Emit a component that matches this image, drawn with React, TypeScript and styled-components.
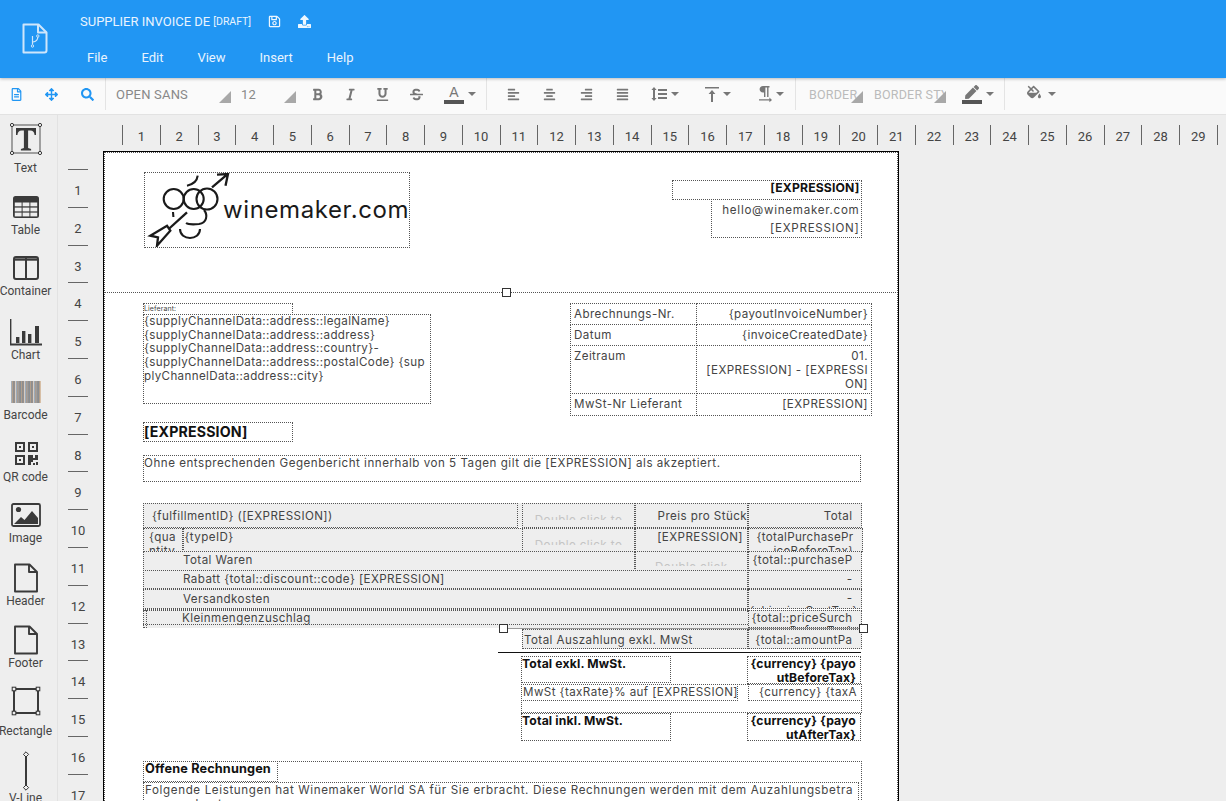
import React from 'react';
import styled, { createGlobalStyle } from 'styled-components';
import {
  FaRegFileAlt,
  FaArrowsAlt,
  FaSearch,
  FaBold,
  FaItalic,
  FaUnderline,
  FaStrikethrough,
  FaAlignLeft,
  FaAlignCenter,
  FaAlignRight,
  FaAlignJustify,
  FaPen,
  FaFillDrip,
  FaRegSave,
  FaUpload,
} from 'react-icons/fa';

const GlobalStyle = createGlobalStyle`
  html, body {
    margin: 0;
    height: 100%;
    overflow: hidden;
    background: #eeeeee;
    font-family: Roboto, "Liberation Sans", sans-serif;
  }
`;

const Shell = styled.div`
  display: flex;
  flex-direction: column;
  height: 801px;
  overflow: hidden;
`;

/* ---------- top bar ---------- */

const TopBar = styled.header`
  display: flex;
  flex: none;
  height: 78px;
  background: #2196f3;
  color: #fff;
  position: relative;
  z-index: 2;
  box-shadow: 0 1px 3px rgba(0, 0, 0, 0.25);
`;

const LogoSlot = styled.div`
  width: 80px;
  padding: 23px 0 0 22px;
  box-sizing: border-box;
`;

const TopColumn = styled.div`
  display: flex;
  flex-direction: column;
`;

const TitleRow = styled.div`
  display: flex;
  align-items: center;
  height: 21px;
  margin-top: 11px;
  font-size: 13px;
  color: #e9f4fe;
`;

const Draft = styled.span`
  font-size: 10.5px;
  margin-left: 3px;
`;

const TitleIcon = styled.span<{ $ml: number }>`
  display: flex;
  margin-left: ${(p) => p.$ml}px;
  font-size: 13px;
  color: #eef7fe;
`;

const MenuRow = styled.nav`
  display: flex;
  gap: 34px;
  margin: 16px 0 0 7px;
  font-size: 13px;
  line-height: 20px;
  color: #e9f4fe;
`;

/* ---------- toolbar ---------- */

const ToolBar = styled.div`
  display: flex;
  flex: none;
  height: 36px;
  background: #fafafa;
  border-bottom: 1px solid #e2e2e2;
`;

const ToolGroup = styled.div<{ $w: number; $pl?: number; $last?: boolean }>`
  display: flex;
  align-items: center;
  box-sizing: border-box;
  width: ${(p) => p.$w}px;
  height: 32px;
  padding-left: ${(p) => p.$pl ?? 0}px;
  border-right: ${(p) => (p.$last ? '0' : '1px solid #e4e4e4')};
`;

const ToolButton = styled.button<{ $w: number; $ml?: number; $blue?: boolean; $size?: number }>`
  display: flex;
  align-items: center;
  justify-content: center;
  flex: none;
  gap: 4px;
  width: ${(p) => p.$w}px;
  height: 30px;
  margin-left: ${(p) => p.$ml ?? 0}px;
  padding: 0;
  border: 0;
  background: none;
  font-size: ${(p) => p.$size ?? 13}px;
  color: ${(p) => (p.$blue ? '#2196f3' : '#777777')};
`;

const Caret = styled.i`
  display: block;
  width: 0;
  height: 0;
  border-left: 4px solid transparent;
  border-right: 4px solid transparent;
  border-top: 4px solid #777777;
`;

const SelectBox = styled.div<{ $w: number; $ml?: number; $faded?: boolean }>`
  position: relative;
  flex: none;
  width: ${(p) => p.$w}px;
  height: 30px;
  margin-left: ${(p) => p.$ml ?? 0}px;
  overflow: hidden;
  white-space: nowrap;
  line-height: 31px;
  font-size: ${(p) => (p.$faded ? 12.5 : 13)}px;
  letter-spacing: 0.2px;
  color: ${(p) => (p.$faded ? '#bbbbbb' : '#888888')};

  &::after {
    content: '';
    position: absolute;
    right: 0;
    bottom: 6px;
    width: 0;
    height: 0;
    border-left: 12px solid transparent;
    border-bottom: 12px solid #a8a8a8;
  }
`;

const ColorGlyph = styled.span`
  display: flex;
  flex-direction: column;
  align-items: center;
  width: 20px;
  font-size: 14px;
  line-height: 14px;
  color: #777777;
`;

const ColorBar = styled.b<{ $c: string }>`
  display: block;
  width: 20px;
  height: 4px;
  margin-top: 1px;
  background: ${(p) => p.$c};
`;

/* ---------- work area ---------- */

const Workspace = styled.div`
  display: flex;
  flex: 1;
  min-height: 0;
`;

const Sidebar = styled.aside`
  flex: none;
  width: 58px;
  box-sizing: border-box;
  padding: 8px 6px 0 0;
  border-right: 1px solid #e2e2e2;
  background: #eeeeee;
`;

const PaletteItem = styled.div<{ $h: number; $gap: number }>`
  display: flex;
  flex-direction: column;
  align-items: center;
  height: ${(p) => p.$h}px;
  font-size: 12px;
  line-height: 14px;
  color: #444444;
  white-space: nowrap;

  svg {
    flex: none;
    margin-bottom: ${(p) => p.$gap}px;
  }
`;

const Main = styled.main`
  flex: 1;
  min-width: 0;
`;

const HorizontalRuler = styled.div`
  display: flex;
  height: 36px;
  box-sizing: border-box;
  padding: 10px 0 0 64px;
`;

const HTick = styled.div`
  flex: none;
  box-sizing: border-box;
  width: 37.76px;
  height: 20px;
  padding-top: 2px;
  border-left: 1px solid #666666;
  text-align: center;
  font-size: 13px;
  line-height: 20px;
  color: #444444;
`;

const CanvasRow = styled.div`
  display: flex;
`;

const VerticalRuler = styled.div`
  flex: none;
  width: 45px;
  box-sizing: border-box;
  padding: 18px 0 0 10px;
`;

const VTick = styled.div`
  box-sizing: border-box;
  width: 20px;
  height: 37.8px;
  padding-top: 4px;
  border-top: 1px solid #666666;
  text-align: center;
  font-size: 13px;
  line-height: 34px;
  color: #444444;
`;

/* ---------- the page, a free canvas ---------- */

const Page = styled.div`
  position: relative;
  flex: none;
  width: 796px;
  height: 1123px;
  box-sizing: border-box;
  border: 1px solid #000;
  background: #fff;
  font-family: Inter, "Liberation Sans", sans-serif;

  &::before {
    content: '';
    position: absolute;
    inset: 0;
    border: 1px dotted #555555;
  }
`;

type Rect = { $l: number; $t: number; $w: number; $h: number };

// rectangles are noted in screen pixels, the page's inner corner is 104,152
const box = (x0: number, y0: number, x1: number, y1: number): Rect => ({
  $l: x0 - 104.5,
  $t: y0 - 152,
  $w: x1 - x0,
  $h: y1 - y0,
});

const Field = styled.div<
  Rect & {
    $right?: boolean;
    $bold?: boolean;
    $gray?: boolean;
    $size?: number;
    $lh?: number;
    $pl?: number;
    $pr?: number;
    $pt?: number;
    $ls?: number;
    $plain?: boolean;
  }
>`
  position: absolute;
  left: ${(p) => p.$l}px;
  top: ${(p) => p.$t}px;
  width: ${(p) => p.$w}px;
  height: ${(p) => p.$h}px;
  box-sizing: border-box;
  overflow: hidden;
  padding: ${(p) => p.$pt ?? 0}px ${(p) => p.$pr ?? 1}px 0 ${(p) => p.$pl ?? 1}px;
  border: ${(p) => (p.$plain ? '0' : '1px dotted #555555')};
  background: ${(p) => (p.$gray ? '#eeeeee' : 'transparent')};
  text-align: ${(p) => (p.$right ? 'right' : 'left')};
  white-space: pre;
  font-size: ${(p) => p.$size ?? 11.6}px;
  font-weight: ${(p) => (p.$bold ? 700 : 400)};
  line-height: ${(p) => p.$lh ?? 14}px;
  letter-spacing: ${(p) => p.$ls ?? (p.$bold ? 0.15 : 0.42)}px;
  color: ${(p) => (p.$bold ? '#111111' : '#444444')};
`;

const Ghost = styled.span<{ $top: number; $clip: number }>`
  display: block;
  height: ${(p) => p.$clip}px;
  margin-top: ${(p) => p.$top}px;
  overflow: hidden;
  text-align: center;
  line-height: 14px;
  color: #c4c4c4;
`;

const Handle = styled.i<{ $x: number; $y: number }>`
  position: absolute;
  z-index: 3;
  left: ${(p) => p.$x - 104 - 4}px;
  top: ${(p) => p.$y - 152 - 4}px;
  width: 7px;
  height: 7px;
  border: 1px solid #333333;
  background: #fff;
`;

const BandLine = styled.div`
  position: absolute;
  left: 0;
  right: 0;
  top: 140px;
  border-top: 1px dotted #555555;
`;

const RowSeam = styled.div`
  position: absolute;
  left: 39px;
  width: 605px;
  top: 472px;
  border-top: 1px dotted #555555;
`;

const SelectedLine = styled.div`
  position: absolute;
  z-index: 2;
  left: 398px;
  width: 360px;
  top: 476px;
  height: 1px;
  background: #999999;
`;

const RuleLine = styled.div`
  position: absolute;
  left: 394px;
  width: 363px;
  top: 500px;
  height: 1px;
  background: #111111;
`;

const LogoDrawing = styled.svg`
  display: block;
  width: 264px;
  height: 74px;
`;

const MetaTable = styled.div`
  position: absolute;
  left: 466px;
  top: 151px;
  display: grid;
  grid-template-columns: 126px 175px;
  grid-template-rows: 21px 21px 47.5px 22px;
  box-sizing: border-box;
  font-size: 11.6px;
  line-height: 14px;
  letter-spacing: 0.42px;
  color: #444444;
`;

const MetaCell = styled.div<{ $right?: boolean }>`
  box-sizing: border-box;
  margin: 0 -1px -1px 0;
  padding: 3px 3px 0 3px;
  border: 1px dotted #555555;
  text-align: ${(p) => (p.$right ? 'right' : 'left')};
  white-space: pre;
`;

/* ---------- palette drawings ---------- */

const Ink = '#3a3a3a';

const TextIcon = () => (
  <svg width="32" height="32" viewBox="0 0 32 32">
    <rect x="2" y="2" width="28" height="28" fill="none" stroke="#6b6b6b" strokeWidth="1.2" />
    {[2, 30].map((x) =>
      [2, 30].map((y) => <circle key={`${x}-${y}`} cx={x} cy={y} r="1.6" fill="#fff" stroke="#333" />),
    )}
    <path
      d="M6 5h20v7h-1.4c-.4-3-1.4-4.6-4.4-4.6h-2.1V25l3 1v1.4h-10.2V26l3-1V7.4h-2.1c-3 0-4 1.6-4.4 4.6H6z"
      fill={Ink}
    />
  </svg>
);

const TableIcon = () => (
  <svg width="32" height="32" viewBox="0 0 32 32">
    <rect x="3" y="5" width="26" height="22" rx="2.5" fill={Ink} />
    {[4.8, 12.6, 20.4].map((x) =>
      [11.5, 16.6, 21.6].map((y) => <rect key={`${x}-${y}`} x={x} y={y} width="6.8" height="3.8" fill="#eee" />),
    )}
  </svg>
);

const ContainerIcon = () => (
  <svg width="32" height="32" viewBox="0 0 32 32">
    <rect x="4" y="5" width="24" height="22" rx="2" fill="none" stroke={Ink} strokeWidth="2" />
    <path d="M4 7.5h24" stroke={Ink} strokeWidth="2.4" />
    <path d="M16 5v22" stroke={Ink} strokeWidth="2" />
  </svg>
);

const ChartIcon = () => (
  <svg width="32" height="32" viewBox="0 0 32 32">
    <path d="M.5 3v25.5H32" fill="none" stroke={Ink} strokeWidth="1.8" />
    <path d="M6 21h3.4v6H6zM12 15h3.4v12H12zM18 18h3.4v9H18zM25 10h4v17h-4z" fill={Ink} />
  </svg>
);

const stripeColours = ['#5d7186', '#c08f5f', '#44617f', '#97795c', '#e8e8e8', '#4f6b88', '#b38a62', '#6a7f95', '#7d6a58'];

const BarcodeIcon = () => (
  <svg width="32" height="32" viewBox="0 0 32 32">
    {Array.from({ length: 29 }, (_, i) => (
      <rect key={i} x={1.5 + i} y="5" width="1" height="22" fill={stripeColours[i % stripeColours.length]} />
    ))}
  </svg>
);

const QrIcon = () => (
  <svg width="32" height="32" viewBox="0 0 32 32">
    <path
      fillRule="evenodd"
      d="M5 4h10v10H5zM7 6v6h6V6zM9 8h2v2H9zM18 4h10v10H18zM20 6v6h6V6zM22 8h2v2h-2zM5 17h10v10H5zM7 19v6h6v-6zM9 21h2v2H9z"
      fill={Ink}
    />
    <path d="M18 17h5v3h2v-3h3v5h-5v2h-2v3h-3zM26 24h2v3h-2zM23 25h2v2h-2z" fill={Ink} />
  </svg>
);

const ImageIcon = () => (
  <svg width="32" height="32" viewBox="0 0 32 32">
    <rect x="2" y="5" width="28" height="22" rx="1.5" fill="none" stroke={Ink} strokeWidth="1.8" />
    <circle cx="8.5" cy="10.5" r="2.6" fill={Ink} />
    <path d="M4 25l7-7 3.5 3 7.5-9 6 7v6z" fill={Ink} />
  </svg>
);

const SheetIcon = () => (
  <svg width="32" height="32" viewBox="0 0 32 32">
    <path d="M5 2.5h14.5l7.5 7.5v19.5H5z M19 2.5V10h8" fill="none" stroke={Ink} strokeWidth="1.9" strokeLinejoin="round" />
  </svg>
);

const RectangleIcon = () => (
  <svg width="32" height="32" viewBox="0 0 32 32">
    <rect x="4" y="4" width="24" height="24" fill="none" stroke={Ink} strokeWidth="2" />
    {[4, 28].map((x) =>
      [4, 28].map((y) => (
        <rect key={`${x}-${y}`} x={x - 1.8} y={y - 1.8} width="3.6" height="3.6" fill="#eee" stroke="#333" />
      )),
    )}
  </svg>
);

const VLineIcon = () => (
  <svg width="32" height="40" viewBox="0 0 32 40">
    <path d="M16 4v32" stroke={Ink} strokeWidth="2" />
    <path d="M16 .8l2.6 2.6-2.6 2.6-2.6-2.6zM16 34l2.6 2.6-2.6 2.6-2.6-2.6z" fill="#eee" stroke="#333" />
  </svg>
);

const palette: { label: string; h: number; gap: number; icon: React.ReactNode }[] = [
  { label: 'Text', h: 68, gap: 6, icon: <TextIcon /> },
  { label: 'Table', h: 61, gap: 0, icon: <TableIcon /> },
  { label: 'Container', h: 64, gap: 0, icon: <ContainerIcon /> },
  { label: 'Chart', h: 60, gap: 0, icon: <ChartIcon /> },
  { label: 'Barcode', h: 62, gap: 0, icon: <BarcodeIcon /> },
  { label: 'QR code', h: 61, gap: 0, icon: <QrIcon /> },
  { label: 'Image', h: 63, gap: 0, icon: <ImageIcon /> },
  { label: 'Header', h: 62, gap: 0, icon: <SheetIcon /> },
  { label: 'Footer', h: 61, gap: 0, icon: <SheetIcon /> },
  { label: 'Rectangle', h: 66, gap: 7, icon: <RectangleIcon /> },
  { label: 'V-Line', h: 60, gap: 0, icon: <VLineIcon /> },
];

/* ---------- small toolbar drawings ---------- */

const LineSpacing = () => (
  <svg width="16" height="16" viewBox="0 0 16 16" fill="#777777">
    <path d="M3 1l2.6 3H4v8h1.6L3 15 .4 12H2V4H.4zM7 3h9v2H7zM7 7h9v2H7zM7 11h9v2H7z" />
  </svg>
);

const AlignTop = () => (
  <svg width="14" height="16" viewBox="0 0 14 16" fill="#777777">
    <path d="M0 1h14v1.4H0zM7 4l3.4 4H8v8H6V8H3.6z" />
  </svg>
);

const PilcrowArrow = () => (
  <svg width="15" height="17" viewBox="0 0 15 17" fill="#777777">
    <path d="M6 0h6.5v1.4h-1V11h-1.4V1.4H8.4V11H7V6.4H6C4 6.4 2.6 5 2.6 3.2S4 0 6 0z" />
    <path d="M2 13.2h10.4V11.6l2.6 2.3-2.6 2.3v-1.6H2z" />
  </svg>
);

const FileBranchLogo = () => (
  <svg width="26" height="31" viewBox="0 0 26 31" fill="none" stroke="#cfe6fb" strokeWidth="2" strokeLinejoin="round">
    <path d="M1.5 1.5h15l8 8v18a2 2 0 0 1-2 2h-21z" />
    <path d="M16 1.5v8h8.5" />
    <path d="M10.5 13v8.5M10.8 19c3.5-.5 5-2 5-5" strokeWidth="1.2" />
    <circle cx="10.5" cy="23" r="1.2" strokeWidth="1" />
    <circle cx="15.8" cy="13" r="1.2" strokeWidth="1" />
  </svg>
);

/* ---------- canvas content ---------- */

const addressText = `{supplyChannelData::address::legalName}
{supplyChannelData::address::address}
{supplyChannelData::address::country}-
{supplyChannelData::address::postalCode} {sup
plyChannelData::address::city}`;

const App: React.FC = () => (
  <>
    <GlobalStyle />
    <Shell>
      <TopBar>
        <LogoSlot>
          <FileBranchLogo />
        </LogoSlot>
        <TopColumn>
          <TitleRow>
            SUPPLIER INVOICE DE<Draft>[DRAFT]</Draft>
            <TitleIcon $ml={17}>
              <FaRegSave />
            </TitleIcon>
            <TitleIcon $ml={17}>
              <FaUpload />
            </TitleIcon>
          </TitleRow>
          <MenuRow>
            <span>File</span>
            <span>Edit</span>
            <span>View</span>
            <span>Insert</span>
            <span>Help</span>
          </MenuRow>
        </TopColumn>
      </TopBar>

      <ToolBar>
        <ToolGroup $w={106}>
          <ToolButton $w={32} $blue>
            <FaRegFileAlt />
          </ToolButton>
          <ToolButton $w={38} $blue>
            <FaArrowsAlt />
          </ToolButton>
          <ToolButton $w={35} $blue>
            <FaSearch />
          </ToolButton>
        </ToolGroup>
        <ToolGroup $w={381} $pl={10}>
          <SelectBox $w={115}>OPEN SANS</SelectBox>
          <SelectBox $w={55} $ml={10}>
            12
          </SelectBox>
          <ToolButton $w={33} $ml={5}>
            <FaBold />
          </ToolButton>
          <ToolButton $w={32}>
            <FaItalic />
          </ToolButton>
          <ToolButton $w={33}>
            <FaUnderline />
          </ToolButton>
          <ToolButton $w={34}>
            <FaStrikethrough />
          </ToolButton>
          <ToolButton $w={48} $ml={3}>
            <ColorGlyph>
              A<ColorBar $c="#555555" />
            </ColorGlyph>
            <Caret />
          </ToolButton>
        </ToolGroup>
        <ToolGroup $w={309} $pl={8}>
          <ToolButton $w={36}>
            <FaAlignLeft />
          </ToolButton>
          <ToolButton $w={37}>
            <FaAlignCenter />
          </ToolButton>
          <ToolButton $w={37}>
            <FaAlignRight />
          </ToolButton>
          <ToolButton $w={35}>
            <FaAlignJustify />
          </ToolButton>
          <ToolButton $w={50}>
            <LineSpacing />
            <Caret />
          </ToolButton>
          <ToolButton $w={56}>
            <AlignTop />
            <Caret />
          </ToolButton>
          <ToolButton $w={48}>
            <PilcrowArrow />
            <Caret />
          </ToolButton>
        </ToolGroup>
        <ToolGroup $w={209} $pl={13}>
          <SelectBox $w={54} $faded>
            BORDER
          </SelectBox>
          <SelectBox $w={72} $ml={11} $faded>
            BORDER STYLE
          </SelectBox>
          <ToolButton $w={44} $ml={10} $size={15}>
            <ColorGlyph>
              <FaPen />
              <ColorBar $c="#555555" />
            </ColorGlyph>
            <Caret />
          </ToolButton>
        </ToolGroup>
        <ToolGroup $w={70} $pl={11} $last>
          <ToolButton $w={48} $size={14}>
            <ColorGlyph>
              <FaFillDrip />
              <ColorBar $c="#fafafa" />
            </ColorGlyph>
            <Caret />
          </ToolButton>
        </ToolGroup>
      </ToolBar>

      <Workspace>
        <Sidebar>
          {palette.map((item) => (
            <PaletteItem key={item.label} $h={item.h} $gap={item.gap}>
              {item.icon}
              {item.label}
            </PaletteItem>
          ))}
        </Sidebar>
        <Main>
          <HorizontalRuler>
            {Array.from({ length: 30 }, (_, i) => (
              <HTick key={i}>{i < 29 ? i + 1 : ''}</HTick>
            ))}
          </HorizontalRuler>
          <CanvasRow>
            <VerticalRuler>
              {Array.from({ length: 18 }, (_, i) => (
                <VTick key={i}>{i + 1}</VTick>
              ))}
            </VerticalRuler>
            <Page>
              <BandLine />
              <Handle $x={506} $y={292} />

              <Field {...box(144, 172, 410, 248)}>
                <LogoDrawing viewBox="0 0 264 74" fill="none" stroke="#1a1a1a" strokeWidth="2.1">
                  <circle cx="27.7" cy="26" r="10" />
                  <circle cx="47.7" cy="26" r="10" />
                  <circle cx="61" cy="26" r="10.5" />
                  <path d="M58 37c4 5 3 13-5 14-4 .4-10 1-13-1" />
                  <path d="M34 56c0 12 20 12 20 0" />
                  <path d="M41 12.7c5-1 10-4 10.7-10M27 39l.4 5" />
                  <path d="M66 14.3L81 1.7M71 1.7l11-.7-2.5 11.7" strokeWidth="2.3" />
                  <path d="M41 39.3L22.7 56" strokeWidth="2.3" />
                  <path d="M4.3 62.7L21 52.7l3.3 5L11 72.7l1-8.4z" strokeWidth="2.3" />
                  <text
                    x="77"
                    y="45"
                    fill="#1a1a1a"
                    stroke="none"
                    fontSize="24"
                    fontFamily="Inter, sans-serif"
                    textLength="186"
                  >
                    winemaker.com
                  </text>
                </LogoDrawing>
              </Field>

              <Field {...box(672.5, 180, 862, 199.5)} $right $bold $size={12.2} $lh={14} $pt={0}>
                [EXPRESSION]
              </Field>
              <Field {...box(711.5, 199, 862, 238)} $right $lh={18} $pt={1} $ls={0.72}>
                {'hello@winemaker.com\n[EXPRESSION]'}
              </Field>

              <Field {...box(143.5, 303, 293, 315)} $size={7} $lh={10} $pl={0} $ls={0.1}>
                Lieferant:
              </Field>
              <Field {...box(143.5, 314, 431, 404)} $lh={13.7} $pl={0} $ls={0.36}>
                {addressText}
              </Field>

              <MetaTable>
                <MetaCell>Abrechnungs-Nr.</MetaCell>
                <MetaCell $right>{'{payoutInvoiceNumber}'}</MetaCell>
                <MetaCell>Datum</MetaCell>
                <MetaCell $right>{'{invoiceCreatedDate}'}</MetaCell>
                <MetaCell>Zeitraum</MetaCell>
                <MetaCell $right>{'01.\n[EXPRESSION] - [EXPRESSI\nON]'}</MetaCell>
                <MetaCell>MwSt-Nr Lieferant</MetaCell>
                <MetaCell $right>[EXPRESSION]</MetaCell>
              </MetaTable>

              <Field {...box(143.5, 422, 293, 442)} $bold $size={14.2} $lh={17} $pl={0}>
                [EXPRESSION]
              </Field>
              <Field {...box(143.5, 454.5, 861, 482)} $pl={0} $ls={0.52}>
                Ohne entsprechenden Gegenbericht innerhalb von 5 Tagen gilt die [EXPRESSION] als akzeptiert.
              </Field>

              {/* line items */}
              <Field {...box(143.5, 502.5, 518, 528)} $gray $pl={8} $pt={5}>
                {'{fulfillmentID} ([EXPRESSION])'}
              </Field>
              <Field {...box(518, 503, 523, 527)} $gray $plain />
              <Field {...box(522.5, 502.5, 635.5, 528)} $gray>
                <Ghost $top={9} $clip={7}>
                  Double click to
                </Ghost>
              </Field>
              <Field {...box(635, 502.5, 748.5, 528)} $gray $right $pt={5} $pr={0}>
                Preis pro Stück
              </Field>
              <Field {...box(748, 502.5, 862, 528)} $gray $right $pt={5} $pr={8}>
                Total
              </Field>

              <Field {...box(143.5, 527.5, 183.5, 551.5)} $gray $pl={5} $pt={1} $lh={14}>
                {'{qua\nntity'}
              </Field>
              <Field {...box(183, 527.5, 523, 551.5)} $gray $pt={1}>
                {'{typeID}'}
              </Field>
              <Field {...box(522.5, 527.5, 635.5, 551.5)} $gray>
                <Ghost $top={9} $clip={7}>
                  Double click to
                </Ghost>
              </Field>
              <Field {...box(635, 527.5, 748.5, 551.5)} $gray $right $pt={1} $pr={4}>
                [EXPRESSION]
              </Field>
              <Field {...box(748, 527.5, 863, 551.5)} $gray $right $pt={1} $pr={8} $ls={0.32}>
                {'{totalPurchasePr\niceBeforeTax}'}
              </Field>

              <Field {...box(143.5, 551, 635.5, 570.5)} $gray $pl={39} $pt={1}>
                Total Waren
              </Field>
              <Field {...box(635, 551, 748.5, 570.5)} $gray>
                <Ghost $top={8} $clip={6}>
                  Double click
                </Ghost>
              </Field>
              <Field {...box(748, 551, 862, 570.5)} $gray $right $pt={1} $pr={8} $ls={0.36}>
                {'{total::purchaseP'}
              </Field>

              <Field {...box(143.5, 570, 748.5, 589)} $gray $pl={39} $pt={1}>
                Rabatt {'{total::discount::code}'} [EXPRESSION]
              </Field>
              <Field {...box(748, 570, 862, 589)} $gray $right $pt={1} $pr={8}>
                -
              </Field>

              <Field {...box(143.5, 588.5, 748.5, 609)} $gray $pl={39} $pt={2}>
                Versandkosten
              </Field>
              <Field {...box(748, 588.5, 862, 609)} $gray $right $pt={2} $pr={8} $lh={13}>
                {'-\n{shippingCostTax}'}
              </Field>

              <Field {...box(143.5, 609.5, 748.5, 628)} $gray $pl={39} $pt={1} $plain>
                Kleinmengenzuschlag
              </Field>
              <RowSeam />
              <Field {...box(143.5, 609.5, 144.5, 628)} />
              <Field {...box(143.5, 609, 748.5, 610)} />
              <Field {...box(748, 609.5, 862, 628)} $gray $right $pt={1} $pr={8} $ls={0.32} $lh={13}>
                {'{total::priceSurch\nargeBeforeTax}'}
              </Field>

              <SelectedLine />
              <Handle $x={503} $y={628} />
              <Handle $x={863} $y={628} />

              <Field {...box(522.5, 629, 748.5, 649)} $gray $pt={3}>
                Total Auszahlung exkl. MwSt
              </Field>
              <Field {...box(748, 629, 862, 649)} $gray $right $pt={3} $pr={8}>
                {'{total::amountPa'}
              </Field>
              <RuleLine />

              <Field {...box(521.5, 656, 671, 683)} $bold $size={12.2} $lh={14} $pl={0}>
                Total exkl. MwSt.
              </Field>
              <Field {...box(747.5, 656, 861.5, 683.5)} $right $bold $size={12.2} $lh={13.5} $pr={4}>
                {'{currency} {payo\nutBeforeTax}'}
              </Field>

              <Field {...box(521.5, 683.5, 862.5, 713)} />
              <Field {...box(521.5, 684, 738.5, 700.5)} $lh={14}>
                MwSt {'{taxRate}'}% auf [EXPRESSION]
              </Field>
              <Field {...box(748, 684, 862.5, 700.5)} $right $lh={14} $pr={4}>
                {'{currency} {taxA'}
              </Field>

              <Field {...box(521.5, 713, 671, 741)} $bold $size={12.2} $lh={14} $pl={0}>
                Total inkl. MwSt.
              </Field>
              <Field {...box(747.5, 713, 861.5, 741)} $right $bold $size={12.2} $lh={13.5} $pr={4}>
                {'{currency} {payo\nutAfterTax}'}
              </Field>

              <Field {...box(143.5, 760.5, 862, 1000)} />
              <Field {...box(143.5, 760.5, 278, 781.5)} $bold $size={12.7} $lh={14}>
                Offene Rechnungen
              </Field>
              <Field {...box(143.5, 782, 859, 900)} $lh={14} $pl={1} $pt={0} $ls={0.63}>
                {
                  'Folgende Leistungen hat Winemaker World SA für Sie erbracht. Diese Rechnungen werden mit dem Auzahlungsbetra\ng verrechnet.'
                }
              </Field>
            </Page>
          </CanvasRow>
        </Main>
      </Workspace>
    </Shell>
  </>
);

export default App;
